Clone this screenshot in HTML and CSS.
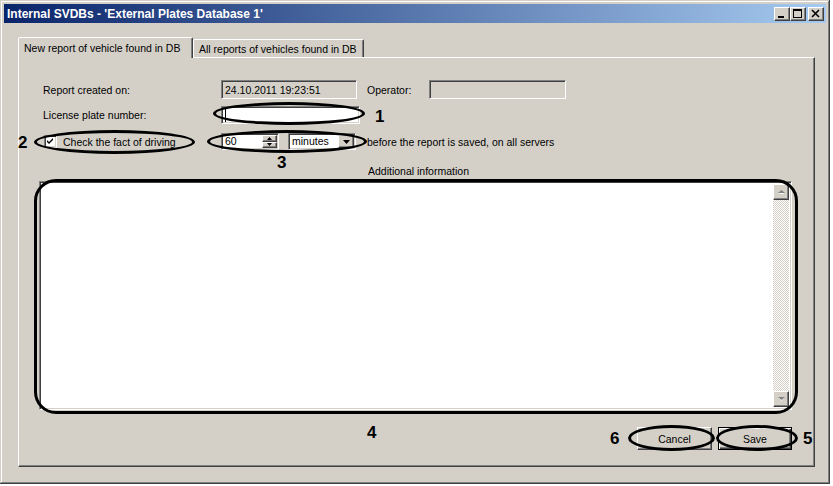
FILE: index.html
```html
<!DOCTYPE html>
<html lang="en">
<head>
    <meta charset="UTF-8">
    <meta name="viewport" content="width=device-width, initial-scale=1.0">
    <title>Internal SVDBs</title>
    <link rel="stylesheet" href="styles.css">
</head>
<body>
    <div class="window">
        <div class="titlebar">
            <span class="title">Internal SVDBs - 'External Plates Database 1'</span>
            <div class="title-buttons">
                <span class="tbtn raised">
                    <svg width="14" height="12" viewBox="0 0 14 12"><rect x="3" y="8" width="6" height="2" fill="#000"/></svg>
                </span>
                <span class="tbtn raised">
                    <svg width="14" height="12" viewBox="0 0 14 12"><rect x="2.5" y="1.5" width="8" height="8" fill="none" stroke="#000"/><rect x="2" y="1" width="9" height="2" fill="#000"/></svg>
                </span>
                <span class="tbtn raised close">
                    <svg width="14" height="12" viewBox="0 0 14 12"><path d="M3 2 L10 9 M10 2 L3 9" stroke="#000" stroke-width="1.6"/></svg>
                </span>
            </div>
        </div>

        <div class="tabs">
            <div class="tab active">New report of vehicle found in DB</div>
            <div class="tab">All reports of vehicles found in DB</div>
        </div>

        <div class="panel">
            <div class="row row-created">
                <span class="label">Report created on:</span>
                <span class="field sunken readonly date-field">24.10.2011 19:23:51</span>
                <span class="operator-label">Operator:</span>
                <span class="field sunken readonly operator-field"></span>
            </div>
            <div class="row row-plate">
                <span class="label">License plate number:</span>
                <span class="field sunken plate-field"><span class="caret"></span></span>
            </div>
            <div class="row row-check">
                <span class="check-group">
                    <span class="checkbox sunken">
                        <svg width="9" height="9" viewBox="0 0 9 9"><path d="M1 3 L3 5 L7 1 L7 3 L3 7 L1 5 Z" fill="#000"/></svg>
                    </span>
                    <span class="check-text">Check the fact of driving</span>
                </span>
                <span class="spin sunken">
                    <span class="spin-value">60</span>
                    <span class="spin-buttons">
                        <span class="spin-btn raised"><svg width="5" height="3" viewBox="0 0 5 3"><path d="M0 3 L2.5 0 L5 3 Z" fill="#000"/></svg></span>
                        <span class="spin-btn raised"><svg width="5" height="3" viewBox="0 0 5 3"><path d="M0 0 L2.5 3 L5 0 Z" fill="#000"/></svg></span>
                    </span>
                </span>
                <span class="combo sunken">
                    <span class="combo-value">minutes</span>
                    <span class="combo-btn raised"><svg width="7" height="4" viewBox="0 0 7 4"><path d="M0 0 L7 0 L3.5 4 Z" fill="#000"/></svg></span>
                </span>
                <span class="hint">before the report is saved, on all servers</span>
            </div>

            <div class="info-label">Additional information</div>

            <div class="memo sunken">
                <div class="scrollbar">
                    <span class="sb-btn raised"><svg width="7" height="4" viewBox="0 0 7 4"><path d="M1 4 L3.5 1 L6 4 Z" fill="#fff"/><path d="M0 3 L3.5 0 L7 3 Z" fill="#808080"/></svg></span>
                    <span class="sb-track"></span>
                    <span class="sb-btn raised"><svg width="7" height="4" viewBox="0 0 7 4"><path d="M1 1 L3.5 4 L6 1 Z" fill="#fff"/><path d="M0 0 L7 0 L3.5 3 Z" fill="#808080"/></svg></span>
                </div>
            </div>

            <div class="actions">
                <button class="btn raised">Cancel</button>
                <button class="btn btn-default">Save</button>
            </div>
        </div>

        <!-- callout marks drawn over the dialog -->
        <span class="ring ring-plate"></span>
        <span class="ring ring-check"></span>
        <span class="ring ring-spin"></span>
        <span class="ring ring-memo"></span>
        <span class="ring ring-cancel"></span>
        <span class="ring ring-save"></span>
        <span class="num num-1">1</span>
        <span class="num num-2">2</span>
        <span class="num num-3">3</span>
        <span class="num num-4">4</span>
        <span class="num num-5">5</span>
        <span class="num num-6">6</span>
    </div>
</body>
</html>
```

FILE: styles.css
```css
* {
    box-sizing: border-box;
}
body {
    margin: 0;
    background: #ffffff;
    font-family: 'Liberation Sans', Arial, sans-serif;
    font-size: 10.5px;
    color: #000;
}
.window {
    position: relative;
    width: 830px;
    height: 484px;
    padding: 4px;
    background: #d4d0c8;
    box-shadow: inset -1px -1px #404040, inset 1px 1px #d4d0c8, inset -2px -2px #808080, inset 2px 2px #ffffff;
}
.titlebar {
    height: 19px;
    display: flex;
    align-items: center;
    justify-content: space-between;
    padding: 0 2px 0 3px;
    background: linear-gradient(to right, #0a246a, #a6caf0);
}
.title {
    color: #fff;
    font-weight: bold;
    font-size: 12px;
}
.title-buttons {
    display: flex;
}
.tbtn {
    width: 16px;
    height: 14px;
    display: flex;
    align-items: center;
    justify-content: center;
    background: #d4d0c8;
}
.tbtn.close {
    margin-left: 2px;
}
.raised {
    border: 1px solid;
    border-color: #fff #404040 #404040 #fff;
    box-shadow: inset -1px -1px #808080;
    background: #d4d0c8;
}
.sunken {
    border: 1px solid;
    border-color: #808080 #fff #fff #808080;
    box-shadow: inset 1px 1px #404040, inset -1px -1px #d4d0c8;
}
.tabs {
    display: flex;
    align-items: flex-end;
    height: 20px;
    margin: 14px 0 0 14px;
}
.tab {
    height: 18px;
    padding: 3px 0 0 5px;
    line-height: 13px;
    border: 1px solid;
    border-bottom: none;
    border-color: #fff #404040 transparent #fff;
    box-shadow: inset -1px 0 #808080;
    border-radius: 2px 2px 0 0;
    background: #d4d0c8;
}
.tab:first-child {
    width: 175px;
}
.tab:last-child {
    width: 171px;
}
.tab.active {
    height: 21px;
    margin-bottom: -1px;
    padding-top: 4px;
    position: relative;
    z-index: 1;
}
.panel {
    width: 797px;
    height: 410px;
    margin-left: 14px;
    padding: 22px 0 0 20px;
    border: 1px solid;
    border-color: #fff #404040 #404040 #fff;
    box-shadow: inset -1px -1px #808080;
}
.row {
    display: flex;
    align-items: center;
    margin-left: 4px;
}
.label {
    width: 178px;
}
.field {
    display: flex;
    align-items: center;
    padding-left: 3px;
    background: #fff;
}
.readonly {
    background: #d4d0c8;
}
.row-created {
    height: 19px;
}
.date-field {
    width: 136px;
    height: 19px;
}
.operator-label {
    width: 62px;
    margin-left: 10px;
}
.operator-field {
    width: 137px;
    height: 19px;
}
.row-plate {
    height: 18px;
    margin-top: 7px;
}
.plate-field {
    width: 139px;
    height: 18px;
}
.caret {
    width: 1px;
    height: 13px;
    background: #000;
}
.row-check {
    height: 17px;
    margin-top: 9px;
}
.check-group {
    width: 178px;
    display: flex;
    align-items: center;
}
.checkbox {
    width: 13px;
    height: 13px;
    margin-left: 1px;
    background: #fff;
    display: flex;
    align-items: center;
    justify-content: center;
}
.check-text {
    margin-left: 6px;
}
.spin {
    width: 58px;
    height: 17px;
    display: flex;
    background: #fff;
}
.spin-value {
    flex: 1;
    padding: 1px 0 0 3px;
}
.spin-buttons {
    width: 16px;
    display: flex;
    flex-direction: column;
    padding: 1px 1px 1px 0;
}
.spin-btn {
    flex: 1;
    display: flex;
    align-items: center;
    justify-content: center;
}
.combo {
    width: 68px;
    height: 17px;
    margin-left: 9px;
    display: flex;
    background: #fff;
}
.combo-value {
    flex: 1;
    padding: 1px 0 0 3px;
}
.combo-btn {
    width: 16px;
    margin: 1px 1px 1px 0;
    display: flex;
    align-items: center;
    justify-content: center;
}
.hint {
    margin-left: 11px;
}
.info-label {
    margin: 15px 0 0 329px;
    line-height: 13px;
}
.memo {
    width: 753px;
    height: 229px;
    margin-top: 3px;
    background: #fff;
    display: flex;
    justify-content: flex-end;
    padding: 2px;
}
.scrollbar {
    width: 16px;
    display: flex;
    flex-direction: column;
}
.sb-btn {
    height: 16px;
    display: flex;
    align-items: center;
    justify-content: center;
}
.sb-track {
    flex: 1;
    background-image: repeating-conic-gradient(#d4d0c8 0% 25%, #ffffff 0% 50%);
    background-size: 2px 2px;
}
.actions {
    width: 753px;
    margin-top: 17px;
    display: flex;
    justify-content: flex-end;
    gap: 6px;
}
.btn {
    width: 75px;
    height: 23px;
    padding: 0;
    font-family: inherit;
    font-size: 10.5px;
    color: #000;
}
.btn-default {
    width: 74px;
    border: 1px solid #000;
    background: #d4d0c8;
    box-shadow: inset 1px 1px #fff, inset -1px -1px #404040, inset -2px -2px #808080;
}
.ring {
    position: absolute;
    border: 3px solid #000;
    border-radius: 50%;
}
.ring-plate {
    left: 213px;
    top: 102px;
    width: 152px;
    height: 23px;
}
.ring-check {
    left: 34px;
    top: 130px;
    width: 161px;
    height: 24px;
}
.ring-spin {
    left: 207px;
    top: 130px;
    width: 160px;
    height: 23px;
}
.ring-memo {
    left: 34px;
    top: 179px;
    width: 764px;
    height: 235px;
    border-radius: 22px;
}
.ring-cancel {
    left: 628px;
    top: 425px;
    width: 87px;
    height: 26px;
}
.ring-save {
    left: 716px;
    top: 425px;
    width: 82px;
    height: 26px;
}
.num {
    position: absolute;
    font-size: 17px;
    line-height: 17px;
    font-weight: bold;
}
.num-1 { left: 375px; top: 108px; }
.num-2 { left: 18px; top: 134px; }
.num-3 { left: 277px; top: 154px; }
.num-4 { left: 367px; top: 424px; }
.num-5 { left: 803px; top: 430px; }
.num-6 { left: 610px; top: 430px; }
```
